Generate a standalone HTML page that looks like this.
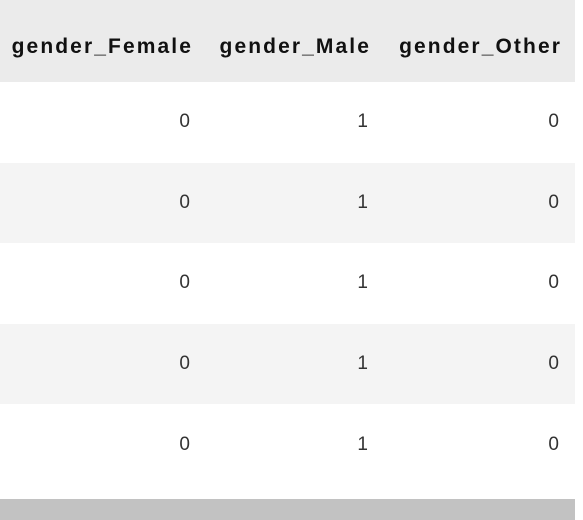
<!DOCTYPE html>
<html><head><style>
body{margin:0;background:#fff;width:583px;height:520px;overflow:hidden;font-family:"Liberation Sans",sans-serif;}
table{position:absolute;left:0;top:0;border-collapse:collapse;width:575px;table-layout:fixed;}
th,td{text-align:right;padding:0 16px 0 0;white-space:nowrap;}
th{height:82px;padding-top:12px;padding-right:13px;box-sizing:border-box;background:#ebebeb;font-weight:bold;font-size:21px;letter-spacing:2.1px;color:#111;}
td{height:80.6px;font-size:19px;color:#333;}
tr.g td{background:#f4f4f4;}
.bar{position:absolute;left:0;top:499px;width:575px;height:21px;background:#c2c2c2;}
</style></head><body>
<table>
<colgroup><col style="width:206px"><col style="width:178px"><col style="width:191px"></colgroup>
<tr><th>gender_Female</th><th>gender_Male</th><th>gender_Other</th></tr>
<tr><td>0</td><td>1</td><td>0</td></tr>
<tr class="g"><td>0</td><td>1</td><td>0</td></tr>
<tr><td>0</td><td>1</td><td>0</td></tr>
<tr class="g"><td>0</td><td>1</td><td>0</td></tr>
<tr><td>0</td><td>1</td><td>0</td></tr>
</table>
<div class="bar"></div>
</body></html>
